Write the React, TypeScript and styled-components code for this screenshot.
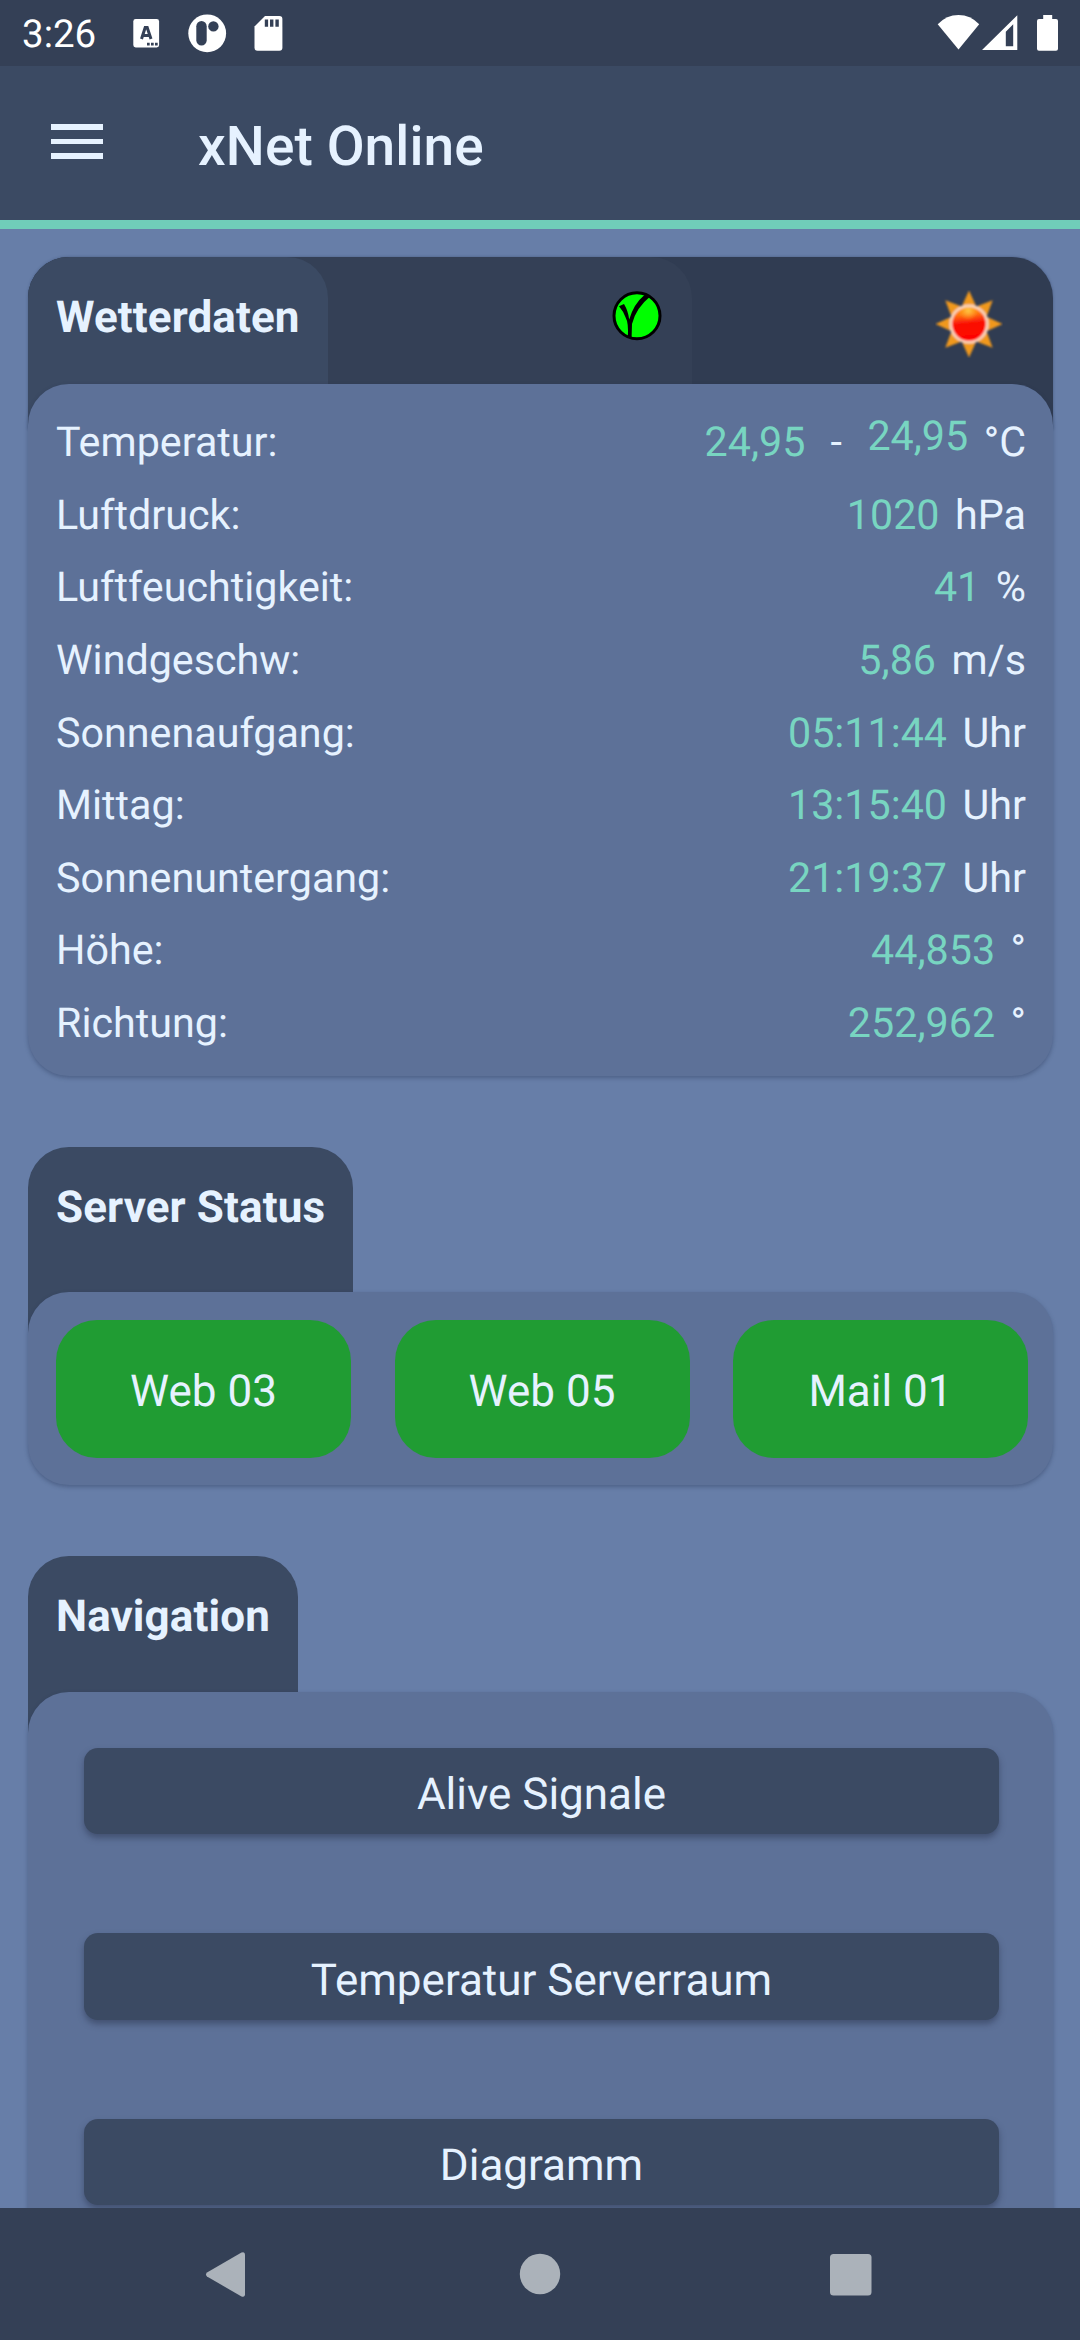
import React from "react";
import styled, { createGlobalStyle } from "styled-components";

const color = {
  system: "#344056",
  header: "#3b4a63",
  deep: "#303c52",
  accent: "#70cdb9",
  page: "#677ea8",
  panel: "#5d7198",
  text: "#e6f2ff",
  value: "#78d5c1",
  online: "#209c33",
  navKey: "#abb2ba",
};

const GlobalStyle = createGlobalStyle`
  * { box-sizing: border-box; }
  body { margin: 0; background: ${color.page}; }
`;

const Screen = styled.div`
  display: flex;
  flex-direction: column;
  width: 1080px;
  height: 2340px;
  overflow: hidden;
  background: ${color.page};
  color: ${color.text};
  font-family: Roboto, "Liberation Sans", sans-serif;
  text-rendering: geometricPrecision;
`;

const StatusBar = styled.div`
  display: flex;
  flex: none;
  height: 66px;
  background: ${color.system};
  color: #fff;
`;

const Clock = styled.div`
  width: 133px;
  padding: 12px 0 0 22px;
  font-size: 38.5px;
  line-height: 46px;
`;

const StatusIcons = styled.svg<{ $push?: boolean }>`
  display: block;
  flex: none;
  margin-left: ${(p) => (p.$push ? "auto" : "0")};
`;

const Header = styled.header`
  display: flex;
  flex: none;
  height: 163px;
  background: ${color.header};
  border-bottom: 9px solid ${color.accent};
`;

const MenuButton = styled.button`
  display: flex;
  flex-direction: column;
  justify-content: space-between;
  width: 52px;
  height: 35px;
  margin: 58px 0 0 51px;
  padding: 0;
  border: 0;
  background: none;
`;

const MenuLine = styled.span`
  height: 5.6px;
  background: ${color.text};
`;

const Title = styled.h1`
  margin: 49px 0 0 95px;
  font-size: 55px;
  font-weight: 500;
  letter-spacing: 0.1px;
  line-height: 64px;
`;

const Content = styled.main`
  display: flex;
  flex: 1;
  flex-direction: column;
  gap: 70.5px;
  min-height: 0;
  padding: 28px 27px 0 28px;
  overflow: hidden;
`;

const Card = styled.section`
  display: flex;
  flex: none;
  flex-direction: column;
  align-items: flex-start;
`;

const TabLayer = styled.div<{ $bg: string; $width?: string; $shade?: boolean }>`
  display: flex;
  justify-content: space-between;
  align-items: flex-start;
  width: ${(p) => p.$width ?? "auto"};
  background: ${(p) => p.$bg};
  border-radius: 41px 41px 0 0;
  box-shadow: ${(p) => (p.$shade ? "0 0 3px rgba(30, 44, 74, 0.4)" : "none")};
`;

const Tab = styled.h2<{ $height: number }>`
  height: ${(p) => p.$height}px;
  margin: 0;
  padding: 34px 28px 0;
  background: ${color.header};
  border-radius: 41px 41px 0 0;
  font-size: 44px;
  font-weight: 700;
  letter-spacing: 0.1px;
  line-height: 52px;
  white-space: nowrap;
`;

const CheckIcon = styled.svg`
  display: block;
  margin: 34px 30px 0 0;
`;

const SunIcon = styled.svg`
  display: block;
  margin: 33px 50px 0 0;
`;

const Panel = styled.div<{ $pad: string; $gap?: number; $columns?: boolean }>`
  position: relative;
  display: flex;
  flex-direction: ${(p) => (p.$columns ? "row" : "column")};
  gap: ${(p) => p.$gap ?? 0}px;
  width: 100%;
  margin-top: -45px;
  padding: ${(p) => p.$pad};
  background: ${color.panel};
  border-radius: 41px;
  box-shadow: 0 2px 4px rgba(30, 44, 74, 0.35);
`;

const Row = styled.div`
  display: flex;
  align-items: center;
  height: 72.6px;
  font-size: 41.25px;
  line-height: 49px;
  white-space: pre;
`;

const Label = styled.span`
  flex: 1;
`;

const Value = styled.span<{ $raised?: boolean }>`
  margin-bottom: ${(p) => (p.$raised ? 12 : 0)}px;
  color: ${color.value};
`;

const Dash = styled.span`
  margin: 0 25.5px 0 25px;
`;

const Unit = styled.span`
  margin-left: 15.5px;
`;

const ServerButton = styled.button`
  flex: 1;
  height: 138px;
  padding: 5px 0 0;
  border: 0;
  border-radius: 41px;
  background: ${color.online};
  color: ${color.text};
  font-family: inherit;
  font-size: 44px;
  text-rendering: inherit;
`;

const NavButton = styled.button`
  height: 86.5px;
  padding: 7px 0 0;
  border: 0;
  border-radius: 14px;
  background: ${color.header};
  box-shadow: 0 4px 6px rgba(40, 50, 75, 0.5);
  color: ${color.text};
  font-family: inherit;
  font-size: 44px;
  text-rendering: inherit;
`;

const SystemNav = styled.nav`
  display: flex;
  flex: none;
  height: 132px;
  background: ${color.system};
`;

const readings = [
  ["Luftdruck:", "1020", "hPa"],
  ["Luftfeuchtigkeit:", "41", "%"],
  ["Windgeschw:", "5,86", "m/s"],
  ["Sonnenaufgang:", "05:11:44", "Uhr"],
  ["Mittag:", "13:15:40", "Uhr"],
  ["Sonnenuntergang:", "21:19:37", "Uhr"],
  ["Höhe:", "44,853", "°"],
  ["Richtung:", "252,962", "°"],
];

const servers = ["Web 03", "Web 05", "Mail 01"];
const pages = ["Alive Signale", "Temperatur Serverraum", "Diagramm"];

// Eight triangular rays, one every 45 degrees
const rays = Array.from({ length: 8 }, (_, i) => i * 45);

function Sun() {
  return (
    <SunIcon width="68" height="68" viewBox="-34 -34 68 68">
      <defs>
        <linearGradient id="sunDisc" x1="0.4" y1="0" x2="0.5" y2="1">
          <stop offset="0" stopColor="#ff9a00" />
          <stop offset="0.22" stopColor="#ff7a10" />
          <stop offset="0.48" stopColor="#fb1206" />
          <stop offset="1" stopColor="#ff0000" />
        </linearGradient>
        <radialGradient id="sunGlow" cx="0.48" cy="0.1" r="0.3">
          <stop offset="0" stopColor="#ffc848" />
          <stop offset="1" stopColor="#ffb030" stopOpacity="0" />
        </radialGradient>
        <filter id="sunSoft">
          <feGaussianBlur stdDeviation="0.9" />
        </filter>
      </defs>
      <g filter="url(#sunSoft)">
        {rays.map((a) => (
          <path key={a} d="M-7.5 -17 L0 -33.5 L7.5 -17 Z" fill="#f0981f" transform={`rotate(${a})`} />
        ))}
        <circle r="18.2" fill="url(#sunDisc)" stroke="#f9d6c0" strokeWidth="2.8" />
        <circle r="16.8" fill="url(#sunGlow)" />
      </g>
    </SunIcon>
  );
}

function Check() {
  return (
    <CheckIcon width="50" height="50" viewBox="0 0 50 50">
      <circle cx="25" cy="24.7" r="23" fill="#00ff00" stroke="#000" strokeWidth="3" />
      <path
        d="M7 15.2 L12 13 Q16.2 20 17.2 28.5 Q21.5 13 33 3.4 L38.2 5.6 Q24 17 20 33 L19.6 46.5 L15.8 46 Q16.8 32 13.4 26 Q11.5 20.5 7 15.2 Z"
        fill="#000"
      />
    </CheckIcon>
  );
}

export default function App() {
  return (
    <Screen>
      <GlobalStyle />
      <StatusBar>
        <Clock>3:26</Clock>
        <StatusIcons width="152" height="66" viewBox="133 0 152 66" fill="#fff">
          <rect x="133.3" y="19" width="25.8" height="28.4" rx="2.4" />
          <path d="M141.5 39 L145.2 27.5 H147.2 L151 39 M142.8 35.6 H149.7" fill="none" stroke={color.system} strokeWidth="3" />
          <path d="M147 42.8 h2.7 v2.6 h-2.7z M151 42.8 h2.7 v2.6 h-2.7z M155 42.8 h2.7 v2.6 h-2.7z" fill={color.system} />
          <circle cx="207.2" cy="33.3" r="18.9" />
          <rect x="196.3" y="21" width="10.4" height="24.4" rx="5.2" fill={color.system} />
          <circle cx="213.4" cy="26.4" r="5.2" fill={color.system} />
          <path d="M265 16 H279.4 Q282.4 16 282.4 19 V47.7 Q282.4 50.7 279.4 50.7 H257.5 Q254.5 50.7 254.5 47.7 V26.5 Z" />
          <path d="M264.8 19.5 h3.3 v7.2 h-3.3z M270 19.5 h3.4 v7.2 h-3.4z M275.4 19.5 h3.4 v7.2 h-3.4z" fill={color.system} />
        </StatusIcons>
        <StatusIcons $push width="150" height="66" viewBox="930 0 150 66" fill="#fff">
          <path d="M937.7 24.3 Q946.5 15 958.5 15 Q970.5 15 979.2 24.3 L958.5 49.5 Z" />
          <path fillRule="evenodd" d="M1017.3 15.3 V50 H982 Z M1013.2 24.3 L1005.8 31.8 V46.2 H1013.2 Z" />
          <path d="M1043.2 15 H1052.2 V19 H1056 Q1058 19 1058 21 V48.7 Q1058 50.7 1056 50.7 H1039 Q1037 50.7 1037 48.7 V21 Q1037 19 1039 19 H1043.2 Z" />
        </StatusIcons>
      </StatusBar>

      <Header>
        <MenuButton aria-label="Menü">
          <MenuLine />
          <MenuLine />
          <MenuLine />
        </MenuButton>
        <Title>xNet Online</Title>
      </Header>

      <Content>
        <Card>
          <TabLayer $bg={color.deep} $width="100%" $shade>
            <TabLayer $bg={color.system} $width="664px">
              <Tab $height={172}>Wetterdaten</Tab>
              <Check />
            </TabLayer>
            <Sun />
          </TabLayer>
          <Panel $pad="23.4px 27px 15.3px 28px">
            <Row>
              <Label>Temperatur:</Label>
              <Value>24,95</Value>
              <Dash>-</Dash>
              <Value $raised>24,95</Value>
              <Unit>°C</Unit>
            </Row>
            {readings.map(([label, value, unit]) => (
              <Row key={label}>
                <Label>{label}</Label>
                <Value>{value}</Value>
                <Unit>{unit}</Unit>
              </Row>
            ))}
          </Panel>
        </Card>

        <Card>
          <Tab $height={190}>Server Status</Tab>
          <Panel $columns $gap={43.5} $pad="28px 25px 27.5px 28px">
            {servers.map((name) => (
              <ServerButton key={name}>{name}</ServerButton>
            ))}
          </Panel>
        </Card>

        <Card>
          <Tab $height={181}>Navigation</Tab>
          <Panel $gap={99} $pad="56px 54px 100px 56px">
            {pages.map((name) => (
              <NavButton key={name}>{name}</NavButton>
            ))}
          </Panel>
        </Card>
      </Content>

      <SystemNav>
        <svg width="1080" height="132" viewBox="0 2208 1080 132" fill={color.navKey}>
          <path d="M207 2272.6 L241.5 2252.6 Q245 2251 245 2254.8 V2294.2 Q245 2298 241.5 2296.4 L207 2276.6 Q205 2274.6 207 2272.6 Z" />
          <circle cx="540" cy="2274" r="20.2" />
          <rect x="830" y="2254" width="41.5" height="41.5" rx="3.5" />
        </svg>
      </SystemNav>
    </Screen>
  );
}
